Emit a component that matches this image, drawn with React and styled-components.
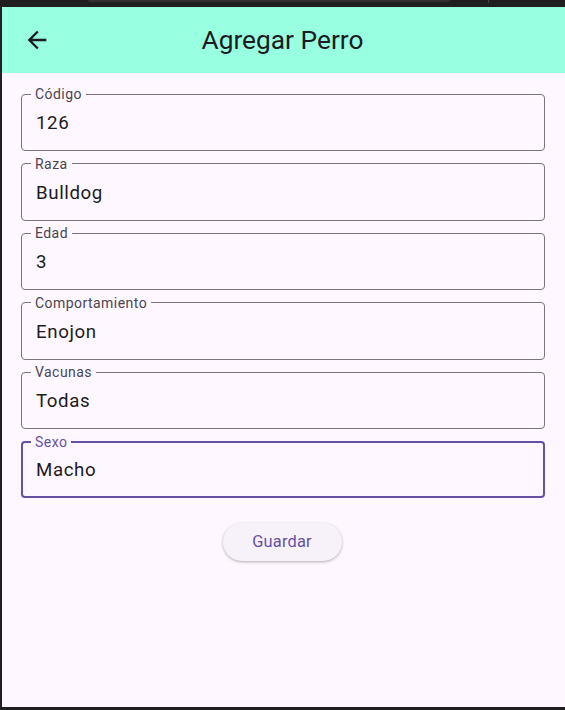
import styled, { createGlobalStyle } from "styled-components";

const GlobalStyle = createGlobalStyle`
  html, body {
    margin: 0;
    background: #1f1f1f;
    font-family: Roboto, "Liberation Sans", sans-serif;
  }
`;

const Frame = styled.div`
  height: 710px;
  display: flex;
  flex-direction: column;
  padding-left: 2px;
  box-sizing: border-box;
`;

const TopStrip = styled.div`
  height: 7px;
  display: flex;
  align-items: flex-start;
  flex-shrink: 0;
`;

const Tab = styled.div`
  margin-left: 86px;
  width: 362px;
  height: 2px;
  background: #303030;
  border-radius: 0 0 2px 2px;
`;

const Tick = styled.div`
  margin-left: 38px;
  width: 1px;
  height: 3px;
  background: #444;
`;

const Screen = styled.div`
  flex: 1;
  margin-bottom: 3px;
  background: #fef7ff;
  display: flex;
  flex-direction: column;
`;

const AppBar = styled.header`
  height: 66px;
  background: #98ffe0;
  display: grid;
  grid-template-columns: 66px 1fr 66px;
  align-items: center;
`;

const BackButton = styled.button`
  border: none;
  background: none;
  padding: 0;
  margin-left: 21px;
  width: 28px;
  height: 28px;
  display: flex;
  align-items: center;
  justify-content: center;
  color: #1d1b20;
`;

const Title = styled.h1`
  margin: 0;
  text-align: center;
  font-size: 26.3px;
  font-weight: 400;
  color: #1d1b20;
  margin-left: -2px;
`;

const Form = styled.form`
  display: flex;
  flex-direction: column;
  gap: 5.6px;
  padding: 14px 20px 0 19px;
`;

const Field = styled.fieldset`
  margin: 0;
  padding: 0 ${({ $active }) => ($active ? 13 : 14)}px
    ${({ $active }) => ($active ? 14 : 15)}px
    ${({ $active }) => ($active ? 8 : 9)}px;
  border: ${({ $active }) => ($active ? "2px solid #6750a4" : "1px solid #79747e")};
  border-radius: 4px;
  min-width: 0;
`;

const Label = styled.legend`
  padding: 0 4px;
  font-size: 14px;
  line-height: 14px;
  letter-spacing: 0.45px;
  color: ${({ $active }) => ($active ? "#6750a4" : "#49454f")};
`;

const Value = styled.div`
  padding: ${({ $active }) => ($active ? 9 : 10)}px 0 0 5px;
  font-size: 18.7px;
  line-height: 24px;
  letter-spacing: 0.6px;
  color: #1d1b20;
`;

const Actions = styled.div`
  display: flex;
  justify-content: center;
  padding-top: 19px;
`;

const SaveButton = styled.button`
  width: 119px;
  height: 38px;
  border: none;
  border-radius: 19px;
  background: #f7f2fa;
  box-shadow: 0 1px 3px rgba(0, 0, 0, 0.3);
  font-family: Roboto, "Liberation Sans", sans-serif;
  font-size: 16.4px;
  font-weight: 400;
  letter-spacing: 0.2px;
  color: #6750a4;
  margin-left: -2px;
`;

const fields = [
  { label: "Código", value: "126" },
  { label: "Raza", value: "Bulldog" },
  { label: "Edad", value: "3" },
  { label: "Comportamiento", value: "Enojon" },
  { label: "Vacunas", value: "Todas" },
  { label: "Sexo", value: "Macho", active: true },
];

const App = () => {
  return (
    <Frame>
      <GlobalStyle />
      <TopStrip>
        <Tab />
        <Tick />
      </TopStrip>
      <Screen>
        <AppBar>
          <BackButton aria-label="Volver">
            <svg width="28" height="28" viewBox="0 0 24 24">
              <path
                d="M20 11H7.83l5.59-5.59L12 4l-8 8 8 8 1.41-1.41L7.83 13H20v-2z"
                fill="currentColor"
              />
            </svg>
          </BackButton>
          <Title>Agregar Perro</Title>
        </AppBar>
        <Form onSubmit={(e) => e.preventDefault()}>
          {fields.map((f) => (
            <Field key={f.label} $active={f.active}>
              <Label $active={f.active}>{f.label}</Label>
              <Value $active={f.active}>{f.value}</Value>
            </Field>
          ))}
          <Actions>
            <SaveButton type="submit">Guardar</SaveButton>
          </Actions>
        </Form>
      </Screen>
    </Frame>
  );
};

export default App;
